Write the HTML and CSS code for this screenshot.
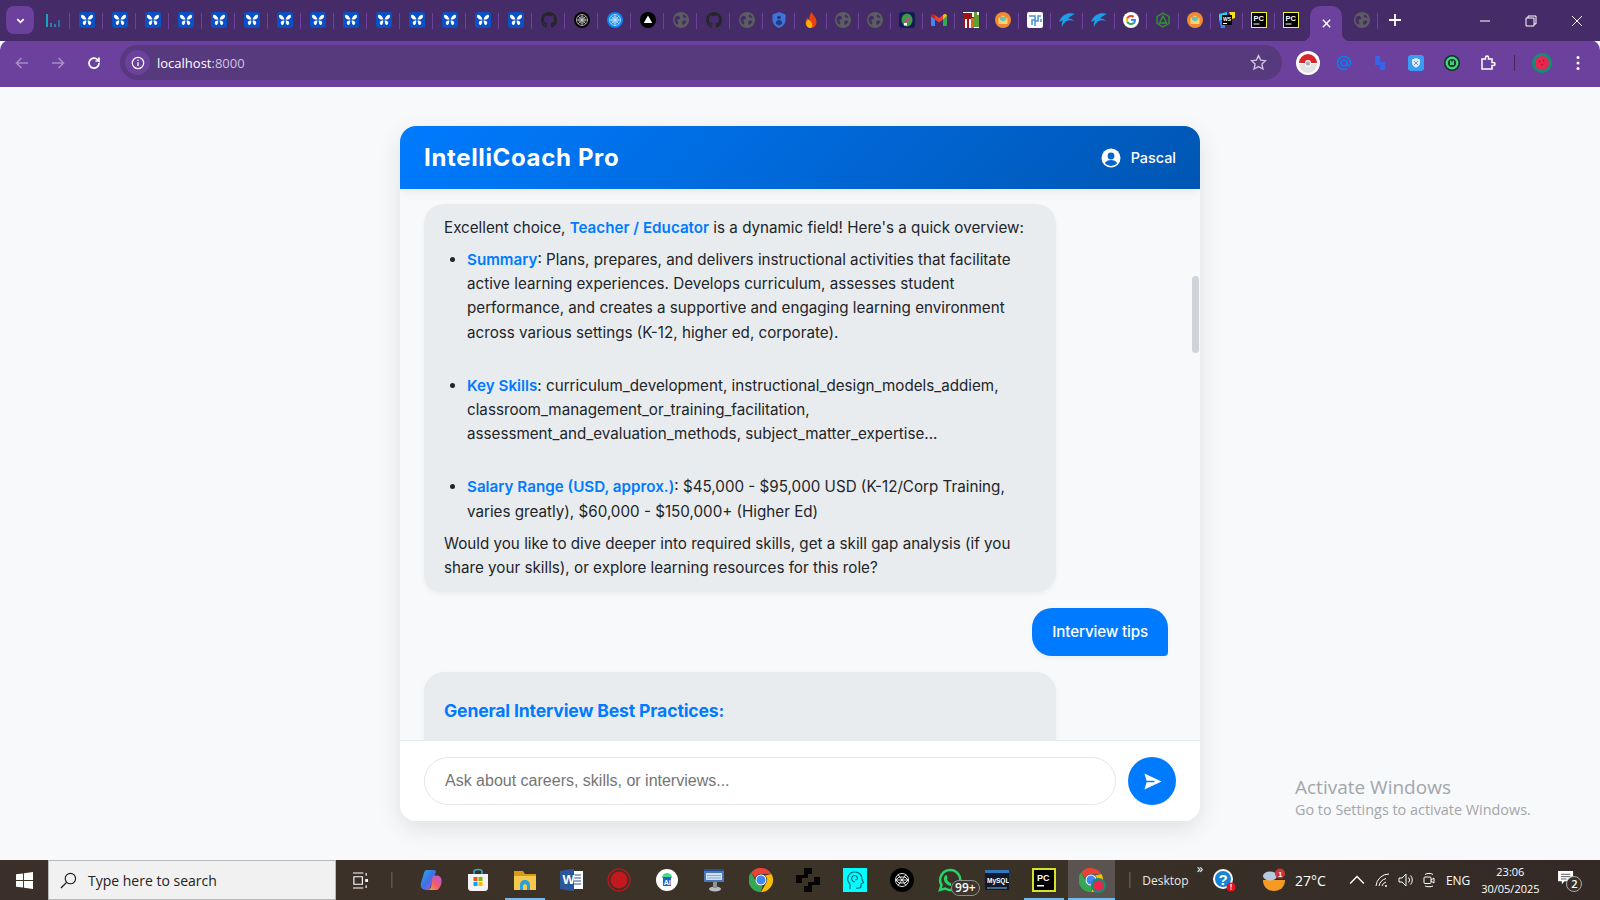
FILE: index.html
```html
<!DOCTYPE html>
<html lang="en">
<head>
<meta charset="utf-8">
<title>IntelliCoach Pro</title>
<link rel="stylesheet" href="styles.css">
</head>
<body>
<svg class="defs" width="0" height="0" aria-hidden="true">
  <symbol id="bars" viewBox="0 0 16 16"><path fill="#1f9fc0" d="M0 2h2v13H0z"/><path fill="#2b7fb0" d="M4 11h2v4H4zM8 12h2v3H8z"/><path fill="#2d6da8" d="M12 8h2v7h-2z"/></symbol>
  <symbol id="fly" viewBox="0 0 16 16"><rect width="16" height="16" rx="2.500" fill="#0b50c4"/><path fill="#fff" d="M7.500 7.500C6.800 5 5 3 3.300 2.800 1.800 2.700 1.700 4.300 2.300 5.500 3 7 4.700 7.800 7.500 7.500zM8.500 7.500C9.200 5 11 3 12.700 2.800 14.200 2.700 14.300 4.300 13.700 5.500 13 7 11.300 7.800 8.500 7.500zM7.300 8.500C5.500 8.300 4 9 3.800 10.500 3.600 12 4.700 13.300 5.600 13 6.700 12.700 7.400 10.500 7.300 8.500zM8.700 8.500C10.500 8.300 12 9 12.200 10.500 12.400 12 11.300 13.300 10.400 13 9.300 12.700 8.600 10.500 8.700 8.500z"/></symbol>
  <symbol id="gh" viewBox="0 0 16 16"><path fill="#25262b" d="M8 0C3.580 0 0 3.580 0 8c0 3.540 2.290 6.530 5.470 7.590.4.070.55-.170.55-.380 0-.190-.010-.820-.010-1.490-2.010.370-2.530-.490-2.690-.940-.090-.230-.480-.940-.820-1.130-.280-.150-.680-.520-.010-.530.630-.010 1.080.580 1.230.820.720 1.210 1.870.870 2.330.660.070-.520.280-.870.510-1.070-1.780-.2-3.640-.890-3.640-3.950 0-.870.310-1.590.820-2.150-.080-.2-.360-1.020.080-2.120 0 0 .670-.210 2.200.820.640-.180 1.320-.270 2-.270.680 0 1.360.090 2 .270 1.530-1.040 2.200-.820 2.200-.820.440 1.100.160 1.920.080 2.120.510.560.820 1.270.820 2.150 0 3.070-1.870 3.750-3.650 3.950.290.250.540.730.540 1.480 0 1.070-.010 1.930-.010 2.200 0 .210.150.460.550.380A8.013 8.013 0 0016 8c0-4.420-3.580-8-8-8z"/></symbol>
  <symbol id="mesh" viewBox="0 0 16 16"><circle cx="8" cy="8" r="8" fill="#050505"/><g fill="none" stroke="#c8c8c8" stroke-width=".8"><circle cx="8" cy="8" r="5.500"/><circle cx="8" cy="8" r="3.300"/><circle cx="8" cy="8" r="1.300"/><path d="M2.500 8h11M8 2.500v11M4 4l8 8M12 4l-8 8"/></g></symbol>
  <symbol id="meshb" viewBox="0 0 16 16"><circle cx="8" cy="8" r="8" fill="#0a84f0"/><g fill="none" stroke="#cfe6ff" stroke-width=".8"><circle cx="8" cy="8" r="5.500"/><circle cx="8" cy="8" r="3.300"/><circle cx="8" cy="8" r="1.300"/><path d="M2.500 8h11M8 2.500v11M4 4l8 8M12 4l-8 8"/></g></symbol>
  <symbol id="tri" viewBox="0 0 16 16"><circle cx="8" cy="8" r="8" fill="#000"/><path fill="#fff" d="M8 3.500l4.200 7.500H3.800z"/></symbol>
  <symbol id="globe" viewBox="0 0 16 16"><circle cx="8" cy="8" r="8" fill="#5c5c63"/><path fill="#452c68" d="M2 5.200C4 3 5.500 3.500 6.800 5c.9 1-.1 2.300-1.300 2.500-1.400.2-1.300 1.400-.5 2.300.7.8.2 2.300-.6 3C2.800 11.800 1.600 9.800 1.600 8c0-1 .1-1.900.4-2.800zM10.200 2.400c1.500.5 2.800 1.700 3.500 3.100-1.100.5-2.700.4-3.500-.4-.7-.7-.6-1.900 0-2.700zM9.700 9c1-.7 2.800-.6 3.800.1-.5 1.800-1.700 3.200-3.400 4-.9-1-1.500-3.100-.4-4.100z"/></symbol>
  <symbol id="shield" viewBox="0 0 16 16"><path fill="#3f73d8" d="M8 0l6.500 2.400v5.300c0 3.900-2.700 6.900-6.500 8.300-3.800-1.400-6.500-4.400-6.500-8.300V2.400z"/><circle cx="8" cy="5.600" r="1.900" fill="#1c3d86"/><path fill="#1c3d86" d="M4.800 11.500c0-2 1.400-3.400 3.200-3.400s3.200 1.400 3.200 3.400c-.9 1-2 1.700-3.200 2.100-1.200-.4-2.300-1.100-3.200-2.100z"/></symbol>
  <symbol id="flame" viewBox="0 0 16 16"><path fill="#e8420f" d="M8.800 0c.5 3 4.700 4.800 4.700 10 0 3.500-2.500 6-5.500 6s-5.500-2.300-5.500-5.500c0-2.300 1.200-3.800 2.500-5 .1 1.200.5 2 1.300 2.500C6 5 7 2 8.800 0z"/><path fill="#ffb400" d="M5.500 7.500c1.500 1 3.800 3 3.800 5.500 0 1.700-1 3-2 3-2.300 0-4.200-1.900-4.200-4.500 0-1.700 1-3 2.400-4z"/></symbol>
  <symbol id="magic" viewBox="0 0 16 16"><rect width="16" height="16" rx="3" fill="#151b55"/><ellipse cx="8" cy="8" rx="5.500" ry="6.500" fill="#3d9a45"/><path fill="#e0389a" d="M5 10l5-5 1.500 1.500-5 5z"/><path fill="#fff" d="M5 11h3v2.500H5z"/></symbol>
  <symbol id="gmail" viewBox="0 0 16 16"><path fill="#4285f4" d="M1 14h3V7L0 4v8.800C0 13.500.5 14 1 14z"/><path fill="#34a853" d="M12 14h3c.5 0 1-.5 1-1.200V4l-4 3z"/><path fill="#ea4335" d="M4 7.500V3L8 6l4-3v4.500L8 10.500z"/><path fill="#c5221f" d="M0 4c0-1.700 1.900-2.500 3-1.700L4 3v4.500z"/><path fill="#fbbc04" d="M12 3l1-.7c1.200-.8 3 0 3 1.700l-4 3.500z"/></symbol>
  <symbol id="cal" viewBox="0 0 16 16"><rect width="16" height="16" fill="#fff"/><path fill="#9c1414" d="M0 1h9v4h2v11H8V7H6v9H4V7H2v9H0z"/><path fill="#e8641a" d="M8 6h3v10H8z"/><path fill="#5e9e34" d="M11 0h3v3h2v12h-5z"/></symbol>
  <symbol id="mail" viewBox="0 0 16 16"><circle cx="8" cy="8" r="8" fill="#f08a35"/><path fill="#ffd36b" d="M3.500 6.500L8 3.500l4.500 3V12h-9z"/><path fill="#5fc4c8" d="M5 5h6v3L8 9.500 5 8z"/></symbol>
  <symbol id="maze" viewBox="0 0 16 16"><rect width="16" height="16" rx="2" fill="#fff"/><path fill="none" stroke="#4a90d0" stroke-width="1.500" d="M2 4h6v4H5v5M14 4h-3v5H8v5M14 7v3"/></symbol>
  <symbol id="dolphin" viewBox="0 0 16 16"><path fill="#1a9fe8" d="M16 2C10 0 3 2 0 10c2-1 3-1.500 4-1.500C3 10 2.500 12 3 15c1-3 3-5.500 6-6.500 2-.6 4-.4 6 .5-1.500-2-3.500-2.800-6-2.500 2-2 4.500-3.500 7-4.500z"/></symbol>
  <symbol id="goog" viewBox="0 0 16 16"><circle cx="8" cy="8" r="8" fill="#fff"/><path fill="#4285f4" d="M13 8.100c0-.4 0-.7-.1-1H8v2h2.800c-.1.700-.5 1.200-1 1.600l1.600 1.300c1-.9 1.600-2.200 1.600-3.900z"/><path fill="#34a853" d="M8 13c1.400 0 2.500-.4 3.400-1.200L9.800 10.500c-.4.300-1 .5-1.800.5-1.300 0-2.500-.9-2.900-2.100L3.400 10.200C4.200 11.900 6 13 8 13z"/><path fill="#fbbc05" d="M5.100 8.900C5 8.600 5 8.300 5 8s0-.6.100-.9L3.400 5.800C3.100 6.500 3 7.200 3 8s.1 1.500.4 2.200z"/><path fill="#ea4335" d="M8 5c.8 0 1.400.3 1.900.8l1.500-1.500C10.500 3.500 9.400 3 8 3 6 3 4.200 4.100 3.400 5.800l1.700 1.300C5.500 5.900 6.700 5 8 5z"/></symbol>
  <symbol id="hex" viewBox="0 0 16 16"><path fill="none" stroke="#2f9a2a" stroke-width="1.300" d="M8 1l6 3.500v7L8 15l-6-3.500v-7zM8 4l3.500 7h-7z"/></symbol>
  <symbol id="chrome" viewBox="0 0 24 24"><path fill="#ea4335" d="M12 0a12 12 0 0110.400 6H12a6 6 0 00-5.700 4L2.100 4.600A12 12 0 0112 0z"/><path fill="#fbbc04" d="M22.400 6A12 12 0 0112 24l5.200-9A6 6 0 0016 7.500z" /><path fill="#34a853" d="M12 24A12 12 0 012.100 4.600L7.300 13.600A6 6 0 0013.600 17.800z"/><circle cx="12" cy="12" r="5.500" fill="#fff"/><circle cx="12" cy="12" r="4.500" fill="#4285f4"/></symbol>
</svg>

<header class="tabstrip">
  <button class="tab-menu" aria-label="Tab search"><svg viewBox="0 0 12 12" class="ico10"><path d="M2.500 4.500L6 8l3.500-3.500" fill="none" stroke="#fff" stroke-width="1.800"/></svg></button>
  <div class="tabs">
    <span class="tab"><svg class="fav"><use href="#bars"/></svg></span>
    <span class="tab"><svg class="fav"><use href="#fly"/></svg></span>
    <span class="tab"><svg class="fav"><use href="#fly"/></svg></span>
    <span class="tab"><svg class="fav"><use href="#fly"/></svg></span>
    <span class="tab"><svg class="fav"><use href="#fly"/></svg></span>
    <span class="tab"><svg class="fav"><use href="#fly"/></svg></span>
    <span class="tab"><svg class="fav"><use href="#fly"/></svg></span>
    <span class="tab"><svg class="fav"><use href="#fly"/></svg></span>
    <span class="tab"><svg class="fav"><use href="#fly"/></svg></span>
    <span class="tab"><svg class="fav"><use href="#fly"/></svg></span>
    <span class="tab"><svg class="fav"><use href="#fly"/></svg></span>
    <span class="tab"><svg class="fav"><use href="#fly"/></svg></span>
    <span class="tab"><svg class="fav"><use href="#fly"/></svg></span>
    <span class="tab"><svg class="fav"><use href="#fly"/></svg></span>
    <span class="tab"><svg class="fav"><use href="#fly"/></svg></span>
    <span class="tab"><svg class="fav"><use href="#gh"/></svg></span>
    <span class="tab"><svg class="fav"><use href="#mesh"/></svg></span>
    <span class="tab"><svg class="fav"><use href="#meshb"/></svg></span>
    <span class="tab"><svg class="fav"><use href="#tri"/></svg></span>
    <span class="tab"><svg class="fav"><use href="#globe"/></svg></span>
    <span class="tab"><svg class="fav"><use href="#gh"/></svg></span>
    <span class="tab"><svg class="fav"><use href="#globe"/></svg></span>
    <span class="tab tab-s"><svg class="fav"><use href="#shield"/></svg></span>
    <span class="tab tab-s"><svg class="fav"><use href="#flame"/></svg></span>
    <span class="tab tab-s"><svg class="fav"><use href="#globe"/></svg></span>
    <span class="tab tab-s"><svg class="fav"><use href="#globe"/></svg></span>
    <span class="tab tab-s"><svg class="fav"><use href="#magic"/></svg></span>
    <span class="tab tab-s"><svg class="fav"><use href="#gmail"/></svg></span>
    <span class="tab tab-s"><svg class="fav"><use href="#cal"/></svg></span>
    <span class="tab tab-s"><svg class="fav"><use href="#mail"/></svg></span>
    <span class="tab tab-s"><svg class="fav"><use href="#maze"/></svg></span>
    <span class="tab tab-s"><svg class="fav"><use href="#dolphin"/></svg></span>
    <span class="tab tab-s"><svg class="fav"><use href="#dolphin"/></svg></span>
    <span class="tab tab-s"><svg class="fav"><use href="#goog"/></svg></span>
    <span class="tab tab-s"><svg class="fav"><use href="#hex"/></svg></span>
    <span class="tab tab-s"><svg class="fav"><use href="#mail"/></svg></span>
    <span class="tab tab-s"><svg viewBox="0 0 16 16" class="fav"><path fill="#22d3e8" d="M0 2l8-2v8H0z"/><path fill="#3b7ff0" d="M0 8h6v8H2z"/><path fill="#f6e21c" d="M10 0h6v6l-3 1z"/><rect x="3" y="3" width="10" height="10" fill="#000"/><text x="4" y="9" class="svg-ws">WS</text><path fill="#fff" d="M4 11h4v1H4z"/></svg></span>
    <span class="tab tab-s"><svg viewBox="0 0 16 16" class="fav"><rect x=".5" y=".5" width="15" height="15" fill="#000" stroke="#f5f032"/><text x="2.500" y="8.500" class="svg-pc">PC</text><path fill="#fff" d="M2.500 11.500h6v1h-6z"/></svg></span>
    <span class="tab tab-s tab-pre"><svg viewBox="0 0 16 16" class="fav"><rect x=".5" y=".5" width="15" height="15" fill="#000" stroke="#f5f032"/><text x="2.500" y="8.500" class="svg-pc">PC</text><path fill="#fff" d="M2.500 11.500h6v1h-6z"/></svg></span>
    <span class="tab-active"><svg viewBox="0 0 12 12" class="ico10"><path d="M2 2l8 8M10 2l-8 8" stroke="#fff" stroke-width="1.600"/></svg></span>
    <span class="tab tab-post"><svg class="fav"><use href="#globe"/></svg></span>
    <span class="new-tab"><svg viewBox="0 0 14 14" class="ico14"><path d="M7 1v12M1 7h12" stroke="#fff" stroke-width="1.800"/></svg></span>
  </div>
  <div class="win-controls">
    <svg viewBox="0 0 12 12" class="ico12"><path d="M1 6h10" stroke="#fff"/></svg>
    <svg viewBox="0 0 12 12" class="ico12"><path d="M3 3V1h8v8H9M1 3h8v8H1z" fill="none" stroke="#fff"/></svg>
    <svg viewBox="0 0 12 12" class="ico12"><path d="M1 1l10 10M11 1L1 11" stroke="#fff"/></svg>
  </div>
</header>

<nav class="toolbar">
  <svg viewBox="0 0 16 16" class="nav-ico"><path d="M14 8H3M7.500 3L2.500 8l5 5" fill="none" stroke="#a48bc6" stroke-width="1.700"/></svg>
  <svg viewBox="0 0 16 16" class="nav-ico"><path d="M2 8h11M8.500 3l5 5-5 5" fill="none" stroke="#a48bc6" stroke-width="1.700"/></svg>
  <svg viewBox="0 0 16 16" class="nav-ico"><path d="M13 8a5 5 0 11-1.500-3.500L13 6V2.500M13 6H9.500" fill="none" stroke="#fff" stroke-width="1.700"/></svg>
  <div class="omnibox">
    <span class="site-chip"><svg viewBox="0 0 16 16" class="ico14"><circle cx="8" cy="8" r="6.500" fill="none" stroke="#fff" stroke-width="1.400"/><path d="M8 7v4.500M8 4.300v1.500" stroke="#fff" stroke-width="1.500"/></svg></span>
    <span class="url">localhost<span class="url-dim">:8000</span></span>
    <svg viewBox="0 0 16 16" class="star"><path d="M8 1.500l2 4.300 4.700.5-3.500 3.200 1 4.600L8 11.800l-4.200 2.300 1-4.600L1.300 6.300 6 5.800z" fill="none" stroke="#cfc4de" stroke-width="1.300"/></svg>
  </div>
  <div class="extensions">
    <svg viewBox="0 0 24 24" class="ext"><circle cx="12" cy="12" r="12" fill="#fff"/><path d="M3 12a9 9 0 0118 0h-6a3 3 0 00-6 0z" fill="#d8262c"/><path d="M3 13h6a3 3 0 006 0h6a9 9 0 01-18 0z" fill="#e3e3e6"/><circle cx="12" cy="12.500" r="2.200" fill="#aeaeb2"/></svg>
    <svg viewBox="0 0 16 16" class="ext"><path d="M11 8a3 3 0 11-6 0 3 3 0 016 0v1.200c0 2 3.500 2 3.500-1.200A6.500 6.500 0 108 14.500c1.300 0 2.300-.3 3.200-.8" fill="none" stroke="#0b7cf0" stroke-width="1.700"/></svg>
    <svg viewBox="0 0 16 16" class="ext"><path fill="#3563e9" d="M3 1h5v6h5v8H8v-5H3z"/></svg>
    <svg viewBox="0 0 16 16" class="ext"><rect width="16" height="16" rx="3" fill="#3a9cf0"/><path fill="#dbeeff" d="M8 3l4 1.500v3.500c0 2.200-1.700 3.700-4 4.700-2.300-1-4-2.500-4-4.700V4.500z"/><path d="M6 6l4 4M10 6l-4 4" stroke="#7f93a8"/></svg>
    <svg viewBox="0 0 16 16" class="ext"><circle cx="8" cy="8" r="8" fill="#18302a"/><circle cx="8" cy="8" r="6.500" fill="#3fd47d"/><circle cx="8" cy="8" r="4" fill="#18302a"/><path d="M6 5.500h1.200L8 8l.8-2.500H10V10H6z" fill="#3fd47d"/></svg>
    <svg viewBox="0 0 16 16" class="ext"><path d="M2 4h3.500V2.500a1.500 1.500 0 013 0V4H12v3.500h1.500a1.500 1.500 0 010 3H12V14H2z" fill="none" stroke="#fff" stroke-width="1.500"/></svg>
  </div>
  <span class="tool-sep"></span>
  <svg viewBox="0 0 24 24" class="avatar"><circle cx="12" cy="12" r="12" fill="#0f8f75"/><circle cx="12" cy="12" r="8.500" fill="#e9264f"/><g fill="#7a1030"><circle cx="9" cy="10" r=".8"/><circle cx="14" cy="9" r=".8"/><circle cx="12" cy="14" r=".8"/></g></svg>
  <svg viewBox="0 0 16 16" class="dots"><circle cx="8" cy="2.500" r="1.500" fill="#fff"/><circle cx="8" cy="8" r="1.500" fill="#fff"/><circle cx="8" cy="13.500" r="1.500" fill="#fff"/></svg>
</nav>

<main class="page">
  <section class="chat">
    <div class="chat-head">
      <h1 class="brand">IntelliCoach Pro</h1>
      <div class="user">
        <svg viewBox="0 0 20 20" class="user-ico"><circle cx="10" cy="10" r="9.500" fill="#fff"/><circle cx="10" cy="8" r="3.400" fill="#0465cf"/><path d="M3.800 15.300c1.300-2.300 3.500-3.300 6.200-3.300s4.900 1 6.200 3.300A8 8 0 0110 18a8 8 0 01-6.200-2.700z" fill="#0465cf"/></svg>
        <span>Pascal</span>
      </div>
    </div>
    <div class="chat-body">
      <div class="messages">
        <div class="bubble bot">
          <p class="lead">Excellent choice, <strong>Teacher / Educator</strong> is a dynamic field! Here's a quick overview:</p>
          <ul class="facts">
            <li><strong>Summary</strong>: Plans, prepares, and delivers instructional activities that facilitate active learning experiences. Develops curriculum, assesses student performance, and creates a supportive and engaging learning environment across various settings (K-12, higher ed, corporate).</li>
            <li><strong>Key Skills</strong>: curriculum_development, instructional_design_models_addiem, classroom_management_or_training_facilitation, assessment_and_evaluation_methods, subject_matter_expertise...</li>
            <li><strong>Salary Range (USD, approx.)</strong>: $45,000 - $95,000 USD (K-12/Corp Training, varies greatly), $60,000 - $150,000+ (Higher Ed)</li>
          </ul>
          <p>Would you like to dive deeper into required skills, get a skill gap analysis (if you share your skills), or explore learning resources for this role?</p>
        </div>
        <div class="bubble me">Interview tips</div>
        <div class="bubble bot">
          <h2 class="bubble-title">General Interview Best Practices:</h2>
        </div>
      </div>
      <div class="scrollbar"><div class="thumb"></div></div>
    </div>
    <form class="composer">
      <input class="prompt" type="text" placeholder="Ask about careers, skills, or interviews...">
      <button class="send" type="button" aria-label="Send"><svg viewBox="0 0 20 20" class="send-ico"><path d="M1.500 1.500L19.500 10 1.500 18.500 3.800 10.800H12V9.200H3.800z" fill="#fff"/></svg></button>
    </form>
  </section>
  <div class="watermark">
    <div class="wm-title">Activate Windows</div>
    <div class="wm-sub">Go to Settings to activate Windows.</div>
  </div>
</main>

<footer class="taskbar">
  <div class="start"><svg viewBox="0 0 18 18" class="start-ico"><path fill="#fff" d="M0 2.500L7.500 1.500v7H0zM8.500 1.300L18 0v8.500H8.500zM0 9.500h7.500v7L0 15.500zM8.500 9.500H18V18l-9.500-1.300z"/></svg></div>
  <div class="search">
    <svg viewBox="0 0 18 18" class="search-ico"><circle cx="11" cy="7" r="5.500" fill="none" stroke="#1b1b1b" stroke-width="1.200"/><path d="M7 11l-6 6" stroke="#1b1b1b" stroke-width="1.400"/></svg>
    <span>Type here to search</span>
  </div>
  <div class="task-view"><svg viewBox="0 0 18 18" class="tb-small"><path d="M1 1h11M1 17h11M2 5h9v8H2zM15 1v3M15 14v3" fill="none" stroke="#fff" stroke-width="1.200"/><rect x="14" y="7.500" width="3" height="3" fill="#fff"/></svg></div>
  <span class="tb-divider"></span>
  <div class="apps">
    <span class="app"><svg viewBox="0 0 24 24" class="app-ico"><defs><linearGradient id="cpa" x1="0" y1="0" x2="1" y2="1"><stop offset="0" stop-color="#1fb6e8"/><stop offset=".5" stop-color="#3f6fe8"/><stop offset="1" stop-color="#d04fd8"/></linearGradient><linearGradient id="cpb" x1="0" y1="1" x2="1" y2="0"><stop offset="0" stop-color="#f5b02c"/><stop offset=".5" stop-color="#ee5a70"/><stop offset="1" stop-color="#b65ae8"/></linearGradient></defs><path fill="url(#cpa)" d="M8 2h7c2 0 2.500 1.500 1.500 3L11 20c-.7 1.500-2 2-3.500 2C3 22 1 19 2 15L5 5c.5-2 1.500-3 3-3z"/><path fill="url(#cpb)" d="M14 8l3-.5c3-.2 5 1 5.500 4 .4 3-.8 7-2.500 9-.8 1.300-2 1.500-3 1.500H8c2 0 3.300-1 4-3z"/></svg></span>
    <span class="app"><svg viewBox="0 0 24 24" class="app-ico"><path d="M8 6V3.500C8 2 9 1.500 12 1.500s4 .5 4 2V6" fill="none" stroke="#26b4d6" stroke-width="1.500"/><path fill="#f3f3f3" d="M2 6h20v14c0 1.500-1 3-3 3H5c-2 0-3-1.500-3-3z"/><path fill="#f25022" d="M7.500 9h4v4h-4z"/><path fill="#7fba00" d="M12.500 9h4v4h-4z"/><path fill="#00a4ef" d="M7.500 14h4v4h-4z"/><path fill="#ffb900" d="M12.500 14h4v4h-4z"/></svg></span>
    <span class="app app-open"><svg viewBox="0 0 24 24" class="app-ico"><path fill="#d99a1c" d="M1 3h9l2 3h11v16H1z"/><path fill="#f6c84e" d="M1 8h22v14H1z"/><path fill="#2b9fd8" d="M7 22v-5c0-3 2-5 5-5s5 2 5 5v5h-3v-4c0-1-1-2-2-2s-2 1-2 2v4z"/></svg></span>
    <span class="app"><svg viewBox="0 0 24 24" class="app-ico"><path fill="#fff" d="M12 3h11v18H12z"/><path stroke="#2b579a" d="M14 7h7M14 10h7M14 13h7M14 16h7"/><path fill="#2b579a" d="M0 3l14-2.500v23L0 21z"/><text x="2.500" y="16" class="svg-w">W</text></svg></span>
    <span class="app"><svg viewBox="0 0 24 24" class="app-ico"><circle cx="12" cy="12" r="11" fill="none" stroke="#b3181e" stroke-width="1.500"/><circle cx="12" cy="12" r="8.500" fill="#c4181f"/></svg></span>
    <span class="app"><svg viewBox="0 0 24 24" class="app-ico"><circle cx="12" cy="12" r="11" fill="#fff"/><path fill="#3ddc84" d="M7 10a5 5 0 0110 0z"/><path fill="#1b66c9" d="M8 9h8v9H8z"/><text x="8.800" y="16.500" class="svg-ai">AI</text></svg></span>
    <span class="app"><svg viewBox="0 0 24 24" class="app-ico"><path fill="#4a76b8" d="M2 1h20v13H2z"/><path fill="#cfe0f5" d="M4 5h16v7H4z"/><path fill="#8fa9cc" d="M5 7h14v1H5zM5 9.500h14v1H5z"/><path fill="#1f4f96" d="M2 1h20v2H2z"/><ellipse cx="13" cy="21" rx="6" ry="2.500" fill="#b9bcc2"/><path fill="#8d9199" d="M11 14h4v6h-4z"/></svg></span>
    <span class="app"><svg class="app-ico"><use href="#chrome"/></svg></span>
    <span class="app"><svg viewBox="0 0 24 24" class="app-ico"><path fill="#050505" d="M8 0h8v6h-4v4H6v5H0V7h8zM24 9v8h-8v7H8v-6h4v-4h6V9z"/></svg></span>
    <span class="app"><svg viewBox="0 0 24 24" class="app-ico"><rect width="24" height="24" fill="#0ff"/><path d="M7 21v-5c-2-2-3-4-2-7 1-3 4-5 7-5 4 0 7 3 7 7 0 1 .5 2 1.500 3.500L18 16v2c0 1-1 2-2 2h-2v1M12 14c-3 0-4-3-3-5s4-2 5 0 0 3-2 3" fill="none" stroke="#006a78" stroke-width="1.200"/></svg></span>
    <span class="app"><svg viewBox="0 0 24 24" class="app-ico"><circle cx="12" cy="12" r="12" fill="#000"/><g fill="none" stroke="#e8e8e8" stroke-width="1"><circle cx="12" cy="12" r="6.500"/><path d="M8 6.500l8 11M16 6.500L8 17.500M5.500 12h13M9 9h6l3 3-3 3H9l-3-3z"/></g></svg></span>
    <span class="app app-wa"><svg viewBox="0 0 24 24" class="app-ico"><path fill="none" stroke="#25d366" stroke-width="2.500" d="M12 2a10 10 0 00-8.500 15L2 22l5-1.500A10 10 0 1012 2z"/><path fill="#25d366" d="M8 7c1 0 1.500 2 1.500 3s-1 1 0 2.500 2.500 2.500 3.500 2.500v3c-3 0-8-4-7-8 .2-1.500 1-2.500 2-3z"/></svg><span class="wa-badge">99+</span></span>
    <span class="app"><svg viewBox="0 0 24 24" class="app-ico"><rect y="2" width="24" height="20" fill="#0f1a2c"/><path fill="#2d7ac0" d="M0 2h24v3H0z"/><text x="2" y="15" class="svg-mysql">MySQL</text><path stroke="#7fb2de" d="M2 20h20"/></svg></span>
    <span class="app app-open"><svg viewBox="0 0 24 24" class="app-ico"><rect x="1" y="1" width="22" height="22" fill="#000" stroke="#d7e02a" stroke-width="2"/><text x="5" y="13" class="svg-pcl">PC</text><path fill="#fff" d="M5 17h7v1.500H5z"/></svg></span>
    <span class="app app-active"><svg class="app-ico"><use href="#chrome"/></svg><svg viewBox="0 0 14 14" class="chrome-badge"><circle cx="7" cy="7" r="7" fill="#0f8f75"/><circle cx="7" cy="7" r="4.800" fill="#e9264f"/></svg></span>
  </div>
  <span class="tb-divider tb-divider-2"></span>
  <span class="desktop">Desktop</span>
  <span class="chev-more">»</span>
  <svg viewBox="0 0 24 24" class="help"><circle cx="11" cy="11" r="10" fill="#fff"/><circle cx="11" cy="11" r="8" fill="#1685d8"/><text x="6.500" y="16.500" class="svg-q">?</text><circle cx="19" cy="19" r="4.500" fill="#e81123"/><path d="M19 16v3.500M19 20.500v1.200" stroke="#fff" stroke-width="1.300"/></svg>
  <span class="weather"><svg viewBox="0 0 24 24" class="weather-ico"><path d="M1 12h22c0 7-5 11-11 11S1 19 1 12z" fill="#f59a23"/><ellipse cx="8" cy="8" rx="7" ry="4.500" fill="#b6cbe0"/><circle cx="18" cy="5.500" r="5" fill="#d13438"/><text x="16.300" y="8.500" class="svg-one">1</text></svg><span>27°C</span></span>
  <div class="tray">
    <svg viewBox="0 0 14 14" class="tray-ico"><path d="M1 10l6-6 6 6" fill="none" stroke="#fff" stroke-width="1.200"/></svg>
    <svg viewBox="0 0 16 16" class="tray-ico"><path d="M1 14A13 13 0 0114 2M4 14a10 10 0 017-7.500M7 14a6 6 0 014-4" fill="none" stroke="#fff"/><circle cx="11" cy="14" r="1" fill="#fff"/></svg>
    <svg viewBox="0 0 16 16" class="tray-ico"><path d="M1 6h3l4-4v12l-4-4H1zM10.500 5.500a3.500 3.500 0 010 5M12.500 3.500a6.500 6.500 0 010 9" fill="none" stroke="#fff"/></svg>
    <svg viewBox="0 0 16 16" class="tray-ico"><path d="M4 2.500c2-1.500 6-1.500 8 0M4 14c2 1 6 1 8 0" fill="none" stroke="#fff"/><rect x="3" y="5" width="7" height="6.500" rx="1" fill="none" stroke="#fff"/><path d="M10 8l3-2v5l-3-2" fill="none" stroke="#fff"/></svg>
  </div>
  <span class="lang">ENG</span>
  <div class="clock"><span>23:06</span><span>30/05/2025</span></div>
  <span class="notif"><svg viewBox="0 0 18 16" class="notif-ico"><path fill="#fff" d="M0 0h16v11H7l-3 3v-3H0z"/><path stroke="#555" d="M3 3.500h10M3 6h10M3 8.500h6"/></svg><span class="notif-count">2</span></span>
</footer>
</body>
</html>
```

FILE: styles.css
```css
* { box-sizing: border-box; }
html, body { margin: 0; height: 100%; }
body { display: flex; flex-direction: column; height: 100vh; overflow: hidden; font-family: "Inter", "Liberation Sans", sans-serif; background: #f8f9fa; color: #212529; }
.defs { position: absolute; }
.svg-ws { font: 700 5px "Liberation Sans", sans-serif; fill: #fff; }
.svg-pc { font: 700 7.500px "Liberation Sans", sans-serif; fill: #fff; }
.svg-w { font: 700 13px "Liberation Sans", sans-serif; fill: #fff; }
.svg-ai { font: 700 7px "Liberation Sans", sans-serif; fill: #fff; }
.svg-mysql { font: 700 6.500px "Liberation Sans", sans-serif; fill: #fff; }
.svg-pcl { font: 700 9px "Liberation Sans", sans-serif; fill: #fff; }
.svg-q { font: 700 15px "Liberation Sans", sans-serif; fill: #fff; }
.svg-one { font: 700 7px "Liberation Sans", sans-serif; fill: #fff; }

/* browser chrome */
.tabstrip { height: 41px; flex: none; display: flex; background: #452c68; position: relative; z-index: 2; }
.tab-menu { width: 28px; height: 28px; margin: 6px 0 0 6px; padding: 0; border: 0; border-radius: 8px; background: #6c419d; display: flex; align-items: center; justify-content: center; }
.ico10 { width: 11px; height: 11px; }
.ico12 { width: 12px; height: 12px; }
.ico14 { width: 14px; height: 14px; }
.tabs { display: flex; margin-left: 3.200px; height: 41px; }
.tab { width: 33px; height: 41px; flex: none; display: flex; align-items: center; justify-content: center; position: relative; padding-bottom: 1px; }
.tab-s { width: 32px; }
.tab::after { content: ""; position: absolute; right: 0; top: 13px; height: 16px; width: 1.500px; background: #6c419d; }
.tab-pre { width: 32px; margin-right: 3px; }
.tab-pre::after { display: none; }
.tab-post { width: 33px; }
.fav { width: 16px; height: 16px; display: block; }
.tab-active { width: 32px; height: 35px; margin: 6px 3px 0 0; background: #6c419d; border-radius: 10px 10px 0 0; display: flex; align-items: center; justify-content: center; position: relative; flex: none; }
.tab-active::before, .tab-active::after { content: ""; position: absolute; bottom: 0; width: 8px; height: 8px; }
.tab-active::before { left: -8px; background: radial-gradient(circle at 0 0, transparent 8px, #6c419d 8.500px); }
.tab-active::after { right: -8px; background: radial-gradient(circle at 100% 0, transparent 8px, #6c419d 8.500px); }
.new-tab { width: 34px; display: flex; align-items: center; justify-content: center; flex: none; padding-bottom: 1px; }
.win-controls { position: absolute; right: 0; top: 0; height: 41px; display: flex; align-items: center; gap: 34px; padding-right: 17px; }
.toolbar { height: 47px; flex: none; display: flex; align-items: center; background: #6c419d; border-radius: 10px 10px 0 0; margin-top: -1px; padding: 0 0 2px 14px; position: relative; z-index: 1; }
.nav-ico { width: 16px; height: 16px; margin-right: 20px; flex: none; }
.omnibox { width: 1162px; height: 35px; margin-left: -2px; border-radius: 18px; background: #57397e; display: flex; align-items: center; padding: 0 15px 0 5px; flex: none; color: #fff; }
.site-chip { width: 25px; height: 25px; border-radius: 50%; background: #6c419d; display: flex; align-items: center; justify-content: center; flex: none; }
.url { font: 400 13px "Open Sans", sans-serif; margin-left: 7px; flex: 1; }
.url-dim { color: #cfc4de; }
.star { width: 17px; height: 17px; }
.extensions { display: flex; align-items: center; margin-left: 14px; gap: 20px; flex: none; }
.ext { width: 16px; height: 16px; flex: none; }
.ext:first-child { width: 24px; height: 24px; margin-right: -4px; }
.tool-sep { width: 1px; height: 16px; background: #3f2a60; margin-left: 18px; flex: none; }
.avatar { width: 20px; height: 20px; margin-left: 17px; flex: none; }
.dots { width: 16px; height: 16px; margin-left: 18px; flex: none; }

/* page */
.page { flex: 1; min-height: 0; display: flex; align-items: center; justify-content: center; position: relative; background: #f8f9fa; }
.chat { width: 800px; height: 695px; background: #fff; border-radius: 16px; box-shadow: 0 8px 24px rgba(0, 0, 0, .1); display: flex; flex-direction: column; overflow: hidden; }
.chat-head { height: 63px; flex: none; display: flex; align-items: center; justify-content: space-between; padding: 0 24px; color: #fff; background: linear-gradient(135deg, #007bff, #0056b3); box-shadow: 0 2px 10px rgba(0, 0, 0, .08); position: relative; }
.brand { margin: 0; font: 700 24px "Inter", sans-serif; letter-spacing: .65px; }
.user { display: flex; align-items: center; gap: 10px; font: 500 14.400px "Inter", sans-serif; }
.user-ico { width: 20px; height: 20px; }
.chat-body { flex: 1; min-height: 0; display: flex; background: #f8f9fa; }
.messages { flex: 1; min-width: 0; overflow: hidden; padding: 15px 24px 0; display: flex; flex-direction: column; gap: 16px; }
.bubble { flex: none; font-size: 15.200px; line-height: 24.320px; padding: 12px 20px; border-radius: 20px; box-shadow: 0 2px 5px rgba(0, 0, 0, .05); }
.bot { width: 632px; background: #e9ecef; color: #212529; align-self: flex-start; border-bottom-left-radius: 16px; }
.me { align-self: flex-end; background: #007bff; color: #fff; font-weight: 500; letter-spacing: -.15px; border-bottom-right-radius: 4px; }
.bot strong { color: #007bff; font-weight: 600; }
.bot p { margin: 0; }
.bot .lead { margin-bottom: 7.500px; }
.facts { margin: 0 0 7.500px; padding: 0 0 0 23px; }
.facts li { margin-bottom: 28.700px; }
.facts li:last-child { margin-bottom: 0; }
.bubble-title { margin: 13px 0 0; font: 700 17.600px/28px "Inter", sans-serif; letter-spacing: -.15px; color: #007bff; height: 61px; }
.scrollbar { width: 8px; flex: none; }
.thumb { width: 7px; height: 77px; margin-top: 87px; border-radius: 4px; background: #ced4da; }
.composer { height: 81px; flex: none; display: flex; align-items: center; gap: 12px; padding: 0 24px; background: #fff; border-top: 1px solid #e9ecef; }
.prompt { flex: 1; min-width: 0; height: 48px; border: 1px solid #e4e6ea; border-radius: 24px; padding: 0 20px; font: 400 16px "Liberation Sans", sans-serif; background: #fff; }
.prompt::placeholder { color: #757575; opacity: 1; }
.send { width: 48px; height: 48px; border: 0; padding: 0; border-radius: 50%; background: #007bff; display: flex; align-items: center; justify-content: center; flex: none; }
.send-ico { width: 19px; height: 19px; }
.watermark { position: absolute; left: 1295px; top: 686.500px; color: #a3a6aa; font-family: "Open Sans", sans-serif; }
.wm-title { font-size: 19px; line-height: 27px; }
.wm-sub { font-size: 14.400px; line-height: 18px; }

/* taskbar */
.taskbar { height: 40px; flex: none; display: flex; align-items: center; background: linear-gradient(90deg, #3b2f29, #3c3327 50%, #332a26); color: #fff; font-family: "Open Sans", sans-serif; }
.start { width: 48px; height: 40px; display: flex; align-items: center; justify-content: center; flex: none; }
.start-ico { width: 17px; height: 17px; }
.search { width: 288px; height: 40px; flex: none; display: flex; align-items: center; background: #f1f1f1; border: 1px solid #b9b9b9; color: #222; font-size: 14px; padding-left: 11px; gap: 11px; }
.search-ico { width: 17px; height: 17px; }
.task-view { width: 48px; display: flex; justify-content: center; flex: none; }
.tb-small { width: 17px; height: 17px; }
.tb-divider { width: 2px; height: 16px; flex: none; border-left: 1px solid #5e574f; border-right: 1px solid #4b4540; margin-left: 7px; }
.apps { display: flex; margin-left: 14px; height: 40px; flex: none; }
.app { width: 47.200px; height: 40px; display: flex; align-items: center; justify-content: center; position: relative; flex: none; }
.app-ico { width: 24px; height: 24px; }
.app-open::after, .app-active::after { content: ""; position: absolute; left: 4px; right: 4px; bottom: 0; height: 2px; background: #76b9ed; }
.app-active { background: #5a534f; }
.app-active::after { left: 0; right: 0; }
.chrome-badge { position: absolute; left: 23px; top: 18px; width: 15px; height: 15px; }
.wa-badge { position: absolute; left: 25px; top: 20px; height: 16px; padding: 0 3px; border: 1px solid #8e8e8e; border-radius: 8px; background: #3b352e; font-size: 12px; font-weight: 600; line-height: 14px; color: #fff; }
.tb-divider-2 { margin-left: 14px; }
.desktop { font-size: 12px; margin-left: 11.500px; color: #e8e8e8; }
.chev-more { font-size: 13px; align-self: flex-start; margin: 1px 0 0 8px; line-height: 14px; }
.help { width: 24px; height: 24px; margin-left: 9px; flex: none; }
.weather { display: flex; align-items: center; gap: 9px; margin-left: 26px; font-size: 14px; }
.weather-ico { width: 24px; height: 24px; }
.tray { display: flex; align-items: center; gap: 7px; margin-left: 23px; }
.tray-ico { width: 16px; height: 16px; }
.tray-ico:first-child { margin-right: 3px; }
.lang { font-size: 12px; margin-left: 9px; }
.clock { display: flex; flex-direction: column; align-items: center; font-size: 11px; line-height: 17px; margin-left: 11px; width: 58px; }
.notif { position: relative; width: 24px; height: 24px; margin-left: 19px; flex: none; }
.notif-ico { width: 17px; height: 15px; position: absolute; left: 0; top: 3px; }
.notif-count { position: absolute; left: 8px; top: 8px; width: 16px; height: 16px; border-radius: 50%; border: 1px solid #aaa; background: #3a3028; font-size: 11px; font-weight: 600; line-height: 14px; text-align: center; }
```
